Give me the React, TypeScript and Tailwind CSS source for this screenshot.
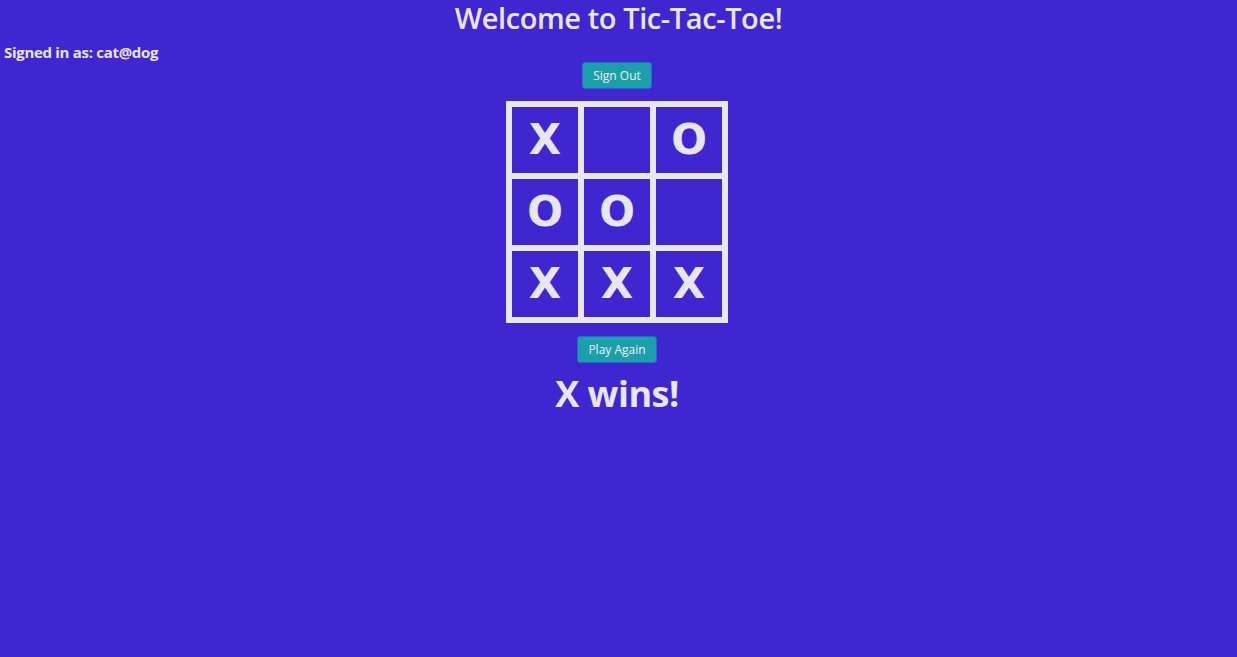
import React, { useState } from "react";

type Mark = "X" | "O" | null;

const START: Mark[] = ["X", null, "O", "O", "O", null, "X", "X", "X"];

const LINES = [
  [0, 1, 2], [3, 4, 5], [6, 7, 8],
  [0, 3, 6], [1, 4, 7], [2, 5, 8],
  [0, 4, 8], [2, 4, 6],
];

function winnerOf(b: Mark[]): Mark {
  for (const [a, c, d] of LINES) {
    if (b[a] && b[a] === b[c] && b[a] === b[d]) return b[a];
  }
  return null;
}

function Cell({ value, onClick }: { value: Mark; onClick: () => void }) {
  return (
    <button
      onClick={onClick}
      className="w-[72px] h-[72px] border-[3px] border-[#e8e6ef] flex items-center justify-center text-[42px] font-bold leading-none text-[#e8e6ef] font-['DejaVu_Sans',sans-serif]"
    >
      {value}
    </button>
  );
}

export default function App() {
  const [board, setBoard] = useState<Mark[]>(START);
  const [turn, setTurn] = useState<"X" | "O">("X");
  const winner = winnerOf(board);

  const play = (i: number) => {
    if (board[i] || winner) return;
    const next = board.slice();
    next[i] = turn;
    setBoard(next);
    setTurn(turn === "X" ? "O" : "X");
  };

  const reset = () => {
    setBoard(Array(9).fill(null));
    setTurn("X");
  };

  return (
    <div className="min-h-screen bg-[#4026d0] text-[#e8e6ef] font-['Open_Sans',sans-serif] flex flex-col">
      <h1 className="pt-[1px] text-center text-[29px] leading-[34px] font-semibold tracking-[-0.4px]">
        Welcome to Tic-Tac-Toe!
      </h1>
      <p className="pl-1 mt-[7px] text-[15px] leading-[20px] font-bold tracking-[-0.3px]">
        Signed in as: cat@dog
      </p>
      <div className="flex flex-col items-center pr-[3px]">
        <button className="px-[10px] h-[27px] bg-[#1aa0a8] border border-[#2f62d8] rounded-[3px] text-[12px] text-[#f0f0f4]">
          Sign Out
        </button>
        <div className="mt-[12px] border-[3px] border-[#e8e6ef] grid grid-cols-3">
          {board.map((v, i) => (
            <Cell key={i} value={v} onClick={() => play(i)} />
          ))}
        </div>
        <button
          onClick={reset}
          className="mt-[13px] px-[10px] h-[27px] bg-[#1aa0a8] border border-[#2f62d8] rounded-[3px] text-[12px] text-[#f0f0f4]"
        >
          Play Again
        </button>
        <h2 className="mt-[7px] text-[36px] leading-[48px] font-bold tracking-[-0.5px]">
          {winner ? `${winner} wins!` : `${turn}'s turn`}
        </h2>
      </div>
    </div>
  );
}
